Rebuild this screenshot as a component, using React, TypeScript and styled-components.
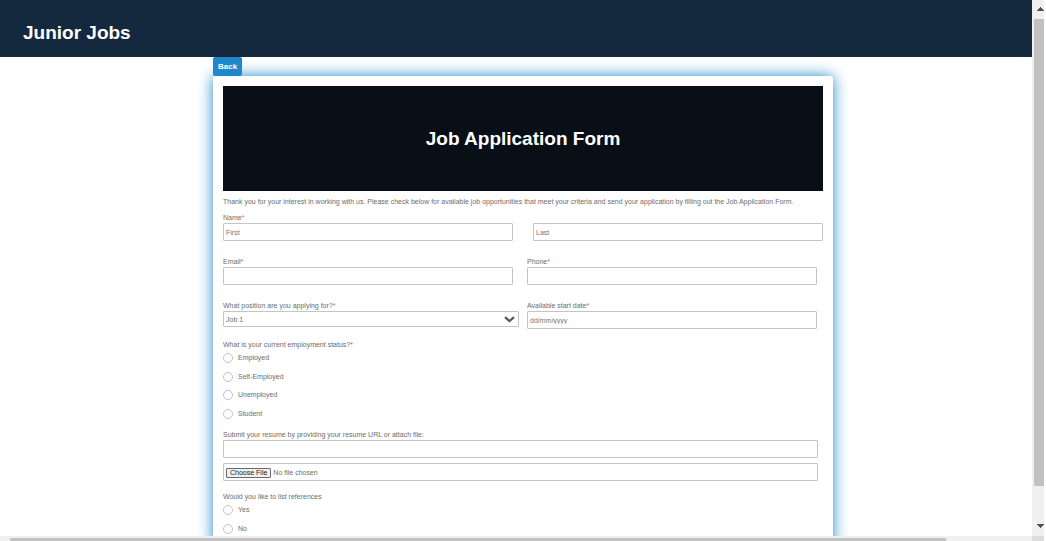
import React from "react";
import styled, { createGlobalStyle } from "styled-components";

const GlobalStyle = createGlobalStyle`
  * { box-sizing: border-box; }
  html, body, #root { height: 100%; }
  body {
    margin: 0;
    overflow: hidden;
    background: #fff;
    color: #6c6c6c;
    font-family: "Liberation Sans", Arial, Helvetica, sans-serif;
    font-size: 7px;
    line-height: 10px;
  }
  h1, p, fieldset { margin: 0; padding: 0; border: 0; }
  input, select, button { font-family: inherit; }
`;

const Frame = styled.div`
  display: grid;
  grid-template-columns: minmax(0, 1fr) 12px;
  grid-template-rows: minmax(0, 1fr) 5px;
  height: 100vh;
  padding-right: 2px;
`;

const Viewport = styled.div`
  overflow: hidden;
`;

const Page = styled.div`
  width: 100vw;
`;

const Header = styled.header`
  display: flex;
  align-items: center;
  height: 57px;
  padding: 8px 23px 0;
  background: #14293d;
`;

const Brand = styled.h1`
  color: #fff;
  font-size: 19px;
  line-height: 24px;
`;

const Content = styled.main`
  width: 620px;
  max-width: 100%;
  margin: 0 auto;
`;

const BackButton = styled.button`
  display: block;
  position: relative;
  z-index: 1;
  height: 19px;
  padding: 0 5px;
  border: 0;
  border-radius: 2px;
  background: #1f88cb;
  color: #fff;
  font-size: 8px;
  font-weight: bold;
  line-height: 18px;
`;

const Card = styled.form`
  padding: 10px;
  border-radius: 3px;
  background: #fff;
  box-shadow: 0 0 15px 0 #1f88cb;
`;

const Banner = styled.div`
  display: flex;
  align-items: center;
  justify-content: center;
  height: 105px;
  background: #080f16;
  color: #fff;
`;

const Intro = styled.p`
  padding: 6px 0 5px;
`;

const FieldRow = styled.div<{ $gap: number; $after: number }>`
  display: flex;
  align-items: flex-start;
  gap: ${(p) => p.$gap}px;
  margin-bottom: ${(p) => p.$after}px;
`;

const Field = styled.div<{ $width?: number }>`
  flex: 0 1 ${(p) => p.$width ?? 290}px;
  min-width: 0;
`;

const Label = styled.label`
  display: block;
  padding-top: 1px;
`;

const Legend = styled.legend`
  display: block;
  margin-bottom: -1px;
  padding: 0;
`;

const Star = styled.span`
  color: #ff4d4d;
`;

const TextInput = styled.input`
  display: block;
  width: 100%;
  height: 18px;
  padding: 0 2px;
  border: 1px solid #c4c4c4;
  border-radius: 1px;
  outline: 0;
  background: #fff;
  color: #6c6c6c;
  font-size: 7px;
  line-height: 16px;

  &::placeholder {
    color: #757575;
    line-height: 16px;
    opacity: 1;
  }
`;

const SelectBox = styled.div`
  display: grid;
  align-items: center;

  > * { grid-area: 1 / 1; }
  > svg { justify-self: end; margin-right: 4px; pointer-events: none; }
`;

const Select = styled.select`
  appearance: none;
  width: 100%;
  height: 16px;
  padding: 1px 2px 0;
  border: 1px solid #c4c4c4;
  border-radius: 1px;
  background: #fff;
  color: #6c6c6c;
  font-size: 7px;
`;

const Options = styled.div<{ $height: number }>`
  display: grid;
  grid-auto-rows: 1fr;
  height: ${(p) => p.$height}px;
`;

const Option = styled.label`
  display: flex;
  align-items: center;
  gap: 5px;
`;

const Radio = styled.input`
  appearance: none;
  width: 10px;
  height: 10px;
  margin: 0;
  border: 1px solid #c4c4c4;
  border-radius: 50%;
  background: #fff;

  &:checked { background: #1f88cb; }
`;

const ResumeGroup = styled.div`
  display: flex;
  flex-direction: column;
  width: 595px;
  max-width: 100%;
  margin: 6px 0 11px;
`;

const FileInput = styled(TextInput)`
  margin-top: 5px;
  padding: 3px 2px;
  line-height: 11px;

  &::file-selector-button {
    height: 10px;
    margin: 0 2px 0 0;
    padding: 0 3px;
    border: 1px solid #6b6b6b;
    border-radius: 1px;
    background: #efefef;
    color: #222;
    font-family: inherit;
    font-size: 7px;
    line-height: 8px;
  }
`;

const VerticalBar = styled.div`
  display: flex;
  flex-direction: column;
  align-items: flex-end;
  padding: 7px 0 8px;
  background: #f0f0f0;
`;

const VerticalThumb = styled.div`
  flex: 0 1 467px;
  width: 10px;
  margin: 8px 0 auto;
  background: #c1c1c1;
`;

const HorizontalBar = styled.div`
  padding: 2px 86px 0 10px;
  background: #f0f0f0;
`;

const HorizontalThumb = styled.div`
  height: 3px;
  background: #c1c1c1;
`;

const Corner = styled.div`
  background: #dcdcdc;
`;

const Arrow = ({ down = false }: { down?: boolean }) => (
  <svg width="7" height="4" viewBox="0 0 7 4" shapeRendering="crispEdges" aria-hidden="true">
    <path d={down ? "M0 0H7V1H6V2H5V3H4V4H3V3H2V2H1V1H0Z" : "M0 4H7V3H6V2H5V1H4V0H3V1H2V2H1V3H0Z"} fill="#505050" />
  </svg>
);

const RadioGroup = ({ legend, required, name, height, items }: {
  legend: string; required?: boolean; name: string; height: number; items: string[];
}) => (
  <fieldset>
    <Legend>{legend}{required && <Star>*</Star>}</Legend>
    <Options $height={height}>
      {items.map((item) => (
        <Option key={item}><Radio type="radio" name={name} value={item} />{item}</Option>
      ))}
    </Options>
  </fieldset>
);

export default function App() {
  return (
    <>
      <GlobalStyle />
      <Frame>
        <Viewport>
          <Page>
            <Header><Brand>Junior Jobs</Brand></Header>
            <Content>
              <BackButton type="button">Back</BackButton>
              <Card>
                <Banner><Brand>Job Application Form</Brand></Banner>
                <Intro>Thank you for your interest in working with us. Please check below for available job opportunities that meet your criteria and send your application by filling out the Job Application Form.</Intro>
                <Label htmlFor="first">Name<Star>*</Star></Label>
                <FieldRow $gap={20} $after={15}>
                  <Field><TextInput id="first" placeholder="First" /></Field>
                  <Field><TextInput placeholder="Last" aria-label="Last name" /></Field>
                </FieldRow>
                <FieldRow $gap={14} $after={15}>
                  <Field>
                    <Label htmlFor="email">Email<Star>*</Star></Label>
                    <TextInput id="email" type="email" />
                  </Field>
                  <Field>
                    <Label htmlFor="phone">Phone<Star>*</Star></Label>
                    <TextInput id="phone" type="tel" />
                  </Field>
                </FieldRow>
                <FieldRow $gap={8} $after={11}>
                  <Field $width={296}>
                    <Label htmlFor="position">What position are you applying for?<Star>*</Star></Label>
                    <SelectBox>
                      <Select id="position"><option>Job 1</option></Select>
                      <svg width="11" height="7" viewBox="0 0 11 7" aria-hidden="true">
                        <path d="M1 1.2L5.5 5L10 1.2" fill="none" stroke="#555" strokeWidth="2.2" />
                      </svg>
                    </SelectBox>
                  </Field>
                  <Field>
                    <Label htmlFor="start">Available start date<Star>*</Star></Label>
                    <TextInput id="start" placeholder="dd/mm/yyyy" />
                  </Field>
                </FieldRow>
                <RadioGroup legend="What is your current employment status?" required name="status" height={74}
                  items={["Employed", "Self-Employed", "Unemployed", "Student"]} />
                <ResumeGroup>
                  <Label htmlFor="resume">Submit your resume by providing your resume URL or attach file:</Label>
                  <TextInput id="resume" type="url" />
                  <FileInput type="file" aria-label="Attach resume" />
                </ResumeGroup>
                <RadioGroup legend="Would you like to list references" name="references" height={37} items={["Yes", "No"]} />
              </Card>
            </Content>
          </Page>
        </Viewport>
        <VerticalBar><Arrow /><VerticalThumb /><Arrow down /></VerticalBar>
        <HorizontalBar><HorizontalThumb /></HorizontalBar>
        <Corner />
      </Frame>
    </>
  );
}
